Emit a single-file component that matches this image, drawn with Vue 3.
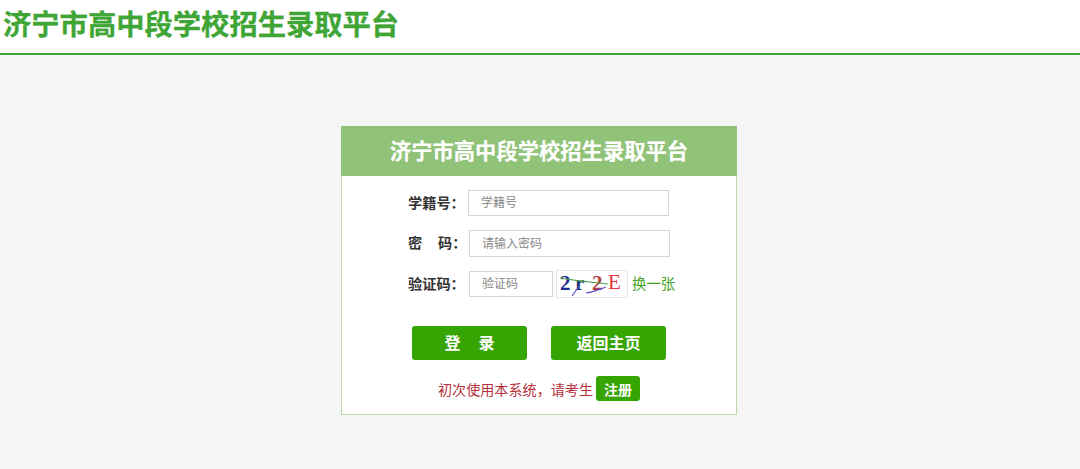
<script setup>
const title = '济宁市高中段学校招生录取平台'
</script>

<template>
  <div class="page">
    <header class="top">
      <h1>{{ title }}</h1>
    </header>
    <main class="main">
      <form class="card" @submit.prevent>
        <h2 class="card-title">{{ title }}</h2>
        <div class="fields">
          <div class="row">
            <label class="label">学籍号：</label>
            <input class="input wide" placeholder="学籍号" />
          </div>
          <div class="row pwd">
            <label class="label">密&nbsp;&nbsp;&nbsp;&nbsp;码：</label>
            <input class="input wide" type="text" placeholder="请输入密码" />
          </div>
          <div class="row code">
            <label class="label">验证码：</label>
            <input class="input short" placeholder="验证码" />
            <svg class="captcha" width="72" height="28" viewBox="0 0 72 28">
              <rect x="0.5" y="0.5" width="71" height="27" fill="#fff" stroke="#e6e6e6" />
              <text x="4" y="20" class="cap" fill="#1f2a8c">2</text>
              <text x="19" y="20" class="cap" fill="#1c3a78">r</text>
              <text x="36" y="20" class="cap" fill="#a8413a">2</text>
              <text x="52" y="19" class="cap" fill="#e2343c">E</text>
              <path d="M4 8 C20 11 36 12 52 14" fill="none" stroke="#4aa04a" stroke-width="1.2" />
              <path d="M16 26 L24 15" fill="none" stroke="#5a55c8" stroke-width="1.2" />
              <path d="M30 23 C37 22 44 19 50 17" fill="none" stroke="#6a4fd0" stroke-width="1.2" />
            </svg>
            <a class="change">换一张</a>
          </div>
        </div>
        <div class="actions">
          <button class="btn">登&nbsp;&nbsp;&nbsp;&nbsp;录</button>
          <button class="btn">返回主页</button>
        </div>
        <p class="note">
          初次使用本系统，请考生
          <button class="reg">注册</button>
        </p>
      </form>
    </main>
  </div>
</template>

<style scoped>
.page {
  height: 469px;
  background: #f5f5f5;
  font-family: "Liberation Sans", "Noto Sans CJK SC", sans-serif;
  overflow: hidden;
}

.top {
  height: 53px;
  background: #fff;
  border-bottom: 2px solid #3fa535;
  padding-left: 3px;
}

.top h1 {
  margin: 0;
  font-size: 28.3px;
  line-height: 51px;
  font-weight: 700;
  color: #3fa535;
  -webkit-text-stroke: 0.3px #3fa535;
}

.main {
  display: flex;
  justify-content: center;
  padding-top: 71px;
  padding-right: 2px;
}

.card {
  width: 396px;
  height: 289px;
  box-sizing: border-box;
  background: #fff;
  border: 1px solid #bcd6ae;
  border-top: 0;
}

.card-title {
  margin: 0 -1px;
  height: 50px;
  background: #90c378;
  color: #fff;
  font-size: 21.3px;
  line-height: 53px;
  font-weight: 700;
  text-align: center;
  -webkit-text-stroke: 0.2px #fff;
}

.fields {
  padding: 14px 0 0 66px;
}

.row {
  display: flex;
  align-items: center;
  height: 26px;
  margin-bottom: 14px;
}

.pwd {
  height: 27px;
  margin-bottom: 13px;
}

.code {
  height: 28px;
  margin-bottom: 0;
}

.label {
  width: 60px;
  flex: none;
  padding-bottom: 2px;
  font-size: 14.2px;
  font-weight: 700;
  color: #333;
  white-space: nowrap;
}

.pwd .label,
.code .label {
  width: 61px;
}

.pwd .label {
  padding-bottom: 3px;
}

.input {
  height: 26px;
  box-sizing: border-box;
  border: 1px solid #d5d5d5;
  padding: 0 12px;
  font-size: 12px;
  font-family: inherit;
  background: #fff;
  outline: none;
}

.pwd .input {
  height: 27px;
}

.input::placeholder {
  color: #888;
}

.wide {
  width: 201px;
}

.short {
  width: 84px;
}

.captcha {
  margin-left: 3px;
  flex: none;
}

.cap {
  font-family: "Liberation Serif", serif;
  font-size: 21px;
  font-weight: 700;
}

.cap:last-of-type {
  font-weight: 400;
}

.change {
  margin-left: 4px;
  padding-bottom: 3px;
  font-size: 14.4px;
  color: #45a325;
  white-space: nowrap;
}

.actions {
  display: flex;
  justify-content: center;
  gap: 24px;
  margin-top: 28px;
}

.btn {
  width: 115px;
  height: 34px;
  border: 0;
  border-radius: 3px;
  background: #36a504;
  color: #fff;
  font-size: 16px;
  font-weight: 700;
  font-family: inherit;
  padding: 0 0 2px;
}

.note {
  display: flex;
  justify-content: center;
  align-items: center;
  gap: 3px;
  margin: 16px 0 0;
  font-size: 14.1px;
  color: #b5303a;
}

.reg {
  width: 44px;
  height: 25px;
  border: 0;
  border-radius: 3px;
  background: #36a504;
  color: #fff;
  font-size: 14px;
  font-weight: 700;
  font-family: inherit;
  padding: 0;
}
</style>
